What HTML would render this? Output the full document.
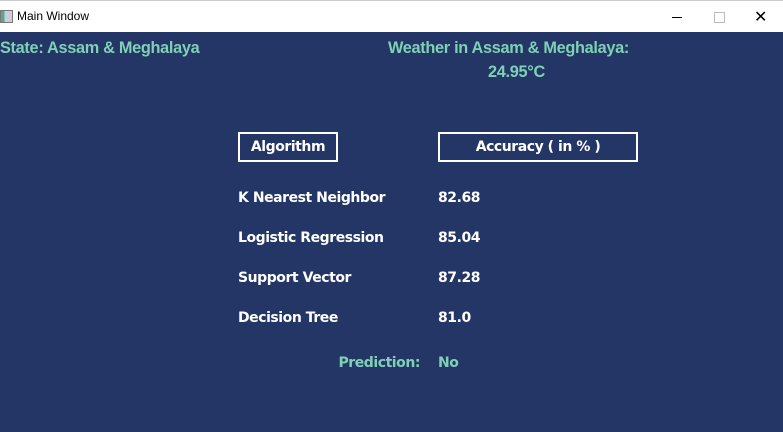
<!DOCTYPE html><html><head><style>
body{margin:0;width:783px;height:432px;overflow:hidden;background:#243665;font-family:"DejaVu Sans","Liberation Sans",sans-serif;position:relative}
.tb{position:absolute;left:0;top:0;width:783px;height:32px;background:#fff;border-top:1px solid #ccc;box-sizing:border-box}
.t{position:absolute;white-space:nowrap;font-weight:bold;font-size:14px;line-height:16px;letter-spacing:-0.45px}
.g{color:#7fd0b6;font-family:"Liberation Sans",sans-serif;font-size:16.3px;letter-spacing:-0.3px}
.w{color:#fff}
.box{position:absolute;border:2px solid #fff;box-sizing:border-box;height:30px;top:132px;color:#fff;font-weight:bold;font-size:14px;line-height:27px;text-align:center;letter-spacing:-0.45px}
</style></head><body>
<div class="tb">
<div style="position:absolute;left:0;top:9px;width:11px;height:11px;border:1px solid #777;background:linear-gradient(90deg,#5a8 0 30%,#ccd 30%)"></div>
<div style="position:absolute;left:17px;top:8px;font:12px 'Liberation Sans',sans-serif;color:#000">Main Window</div>
<div style="position:absolute;left:672px;top:16px;width:10px;height:1px;background:#000"></div>
<div style="position:absolute;left:714px;top:11px;width:9px;height:9px;border:1px solid #bbb"></div>
<div style="position:absolute;left:754px;top:6px;font:16px 'Liberation Sans',sans-serif;color:#000">✕</div>
</div>
<div class="t g" style="left:0;top:40px">State: Assam &amp; Meghalaya</div>
<div class="t g" style="left:388px;top:40px">Weather in Assam &amp; Meghalaya:</div>
<div class="t g" style="left:488px;top:64px">24.95°C</div>
<div class="box" style="left:238px;width:100px">Algorithm</div>
<div class="box" style="left:438px;width:200px">Accuracy ( in % )</div>
<div class="t w" style="left:238px;top:190px">K Nearest Neighbor</div><div class="t w" style="left:438px;top:190px">82.68</div>
<div class="t w" style="left:238px;top:230px">Logistic Regression</div><div class="t w" style="left:438px;top:230px">85.04</div>
<div class="t w" style="left:238px;top:270px">Support Vector</div><div class="t w" style="left:438px;top:270px">87.28</div>
<div class="t w" style="left:238px;top:310px">Decision Tree</div><div class="t w" style="left:438px;top:310px">81.0</div>
<div class="t" style="color:#7fd0b6;right:363px;top:355px">Prediction:</div>
<div class="t" style="color:#7fd0b6;left:438px;top:355px">No</div>
</body></html>
